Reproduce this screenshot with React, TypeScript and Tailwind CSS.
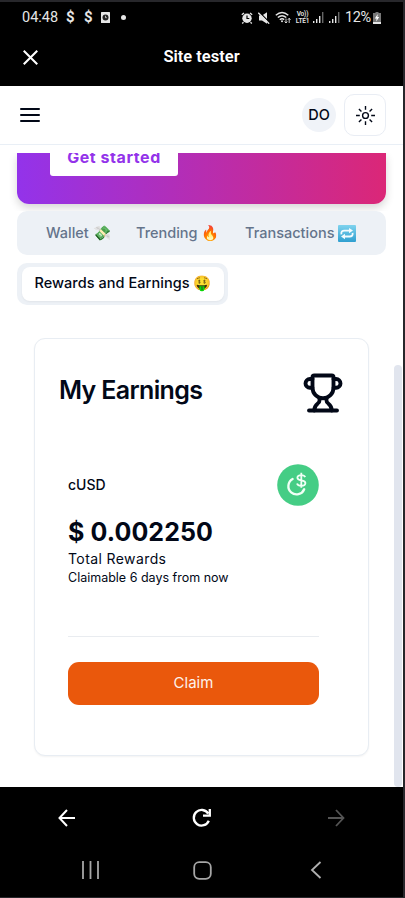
import React from "react";
import { Trophy } from "lucide-react";

function StatusBar() {
  return (
    <div className="flex h-[31px] items-center text-[#e6e6e6] font-[Roboto,sans-serif]">
      <span className="ml-[22px] w-[44px] text-[14.5px] whitespace-nowrap">04:48</span>
      <span className="w-[18px] text-[15px] font-bold">$</span>
      <span className="w-[17px] text-[15px] font-bold">$</span>
      <svg width="9" height="11" viewBox="0 0 9 11" className="shrink-0">
        <rect width="9" height="11" rx="0.5" fill="#e6e6e6" />
        <circle cx="4.5" cy="5.5" r="3" fill="#222" />
        <path d="M4.5 3.8v1.9h1.3" stroke="#ddd" strokeWidth="0.8" fill="none" />
      </svg>
      <span className="ml-[11px] size-[5px] shrink-0 rounded-full bg-[#e6e6e6]" />
      <div className="ml-auto mr-[22px] flex shrink-0 items-center">
        <svg width="12" height="12" viewBox="0 0 12 12" className="mr-[5px]">
          <circle cx="6" cy="6.3" r="4.7" fill="#e6e6e6" />
          <path d="M.8 2.8 3 .9M11.2 2.8 9 .9M2.5 10.2 1.2 11.5M9.5 10.2l1.3 1.3" stroke="#e6e6e6" strokeWidth="1.3" />
          <path d="M6 3.5v3h2.3" stroke="#000" strokeWidth="1.2" fill="none" />
        </svg>
        <svg width="12" height="12" viewBox="0 0 12 12" className="mr-[5px]">
          <path d="M1 3.5h3l5-3.3v11.6L4 8.5H1z" fill="#e6e6e6" />
          <path d="M1.2 0 12 10.8" stroke="#000" strokeWidth="1.2" />
          <path d="m.3.8 10.9 10.9" stroke="#e6e6e6" strokeWidth="1.3" />
        </svg>
        <svg width="16" height="13" viewBox="0 0 16 13" className="mr-[4px]" fill="none" stroke="#e6e6e6">
          <path d="M.8 4.3Q7 -1.3 13.3 4.3M2.8 6.6Q7 2.8 11.3 6.6M4.8 8.8Q7 6.8 9.2 8.6" strokeWidth="1.4" />
          <circle cx="7" cy="10.3" r="1" fill="#e6e6e6" stroke="none" />
          <path d="M11 7.5v4.5m-1.4-1.5 1.4 1.5 1.3-1.5M14.2 12V7.3m-1.4 1.5 1.4-1.5 1.3 1.5" strokeWidth="0.9" />
        </svg>
        <div className="mr-[3px] w-[15px] text-center text-[6.5px] leading-[7px] font-semibold tracking-[-0.2px]">
          <div>Vo))</div>
          <div className="whitespace-nowrap">LTE1</div>
        </div>
        <svg width="11" height="11" viewBox="0 0 11 11" className="mr-[5px]">
          <path d="M0 9h1.4v2H0zM3 7h1.4v4H3zM6 4h1.4v7H6z" fill="#e6e6e6" />
          <path d="M9 0h1.4v11H9z" fill="#666" />
        </svg>
        <svg width="11" height="11" viewBox="0 0 11 11" className="mr-[5px]">
          <path d="M0 9h1.4v2H0zM3 7h1.4v4H3zM6 4h1.4v7H6z" fill="#e6e6e6" />
          <path d="M9 0h1.4v11H9z" fill="#666" />
        </svg>
        <span className="w-[28px] text-[14.5px] tracking-[-0.4px] whitespace-nowrap">12%</span>
        <svg width="8" height="12" viewBox="0 0 8 12">
          <path d="M2.5 0h3v1H8v11H0V1h2.5z" fill="#777" />
          <path d="M0 10h8v2H0z" fill="#e6e6e6" />
          <path d="M4.8 2 1.8 6.4h1.8L3.2 9.4l3-4.4H4.4z" fill="#fff" />
        </svg>
      </div>
    </div>
  );
}

function AppBar() {
  return (
    <div className="grid h-[53px] grid-cols-[60px_1fr_60px] items-center pb-[5px]">
      <svg width="15" height="15" viewBox="0 0 14 14" className="ml-[23px]" stroke="#fff" strokeWidth="1.9">
        <path d="m.7.7 12.6 12.6M13.3.7.7 13.3" />
      </svg>
      <span className="text-center font-[Roboto,sans-serif] text-[16.5px] font-semibold text-white">Site tester</span>
    </div>
  );
}

function SunIcon() {
  return (
    <svg width="19" height="19" viewBox="0 0 15 15" fill="none" stroke="#020817" strokeWidth="1.1">
      <circle cx="7.5" cy="7.5" r="2.3" />
      <path d="M7.5 0v3M7.5 12v3M0 7.5h3M12 7.5h3M2.3 2.3l2 2M10.7 10.7l2 2M2.3 12.7l2-2M10.7 4.3l2-2" />
    </svg>
  );
}

function SiteHeader() {
  return (
    <header className="flex h-[59px] items-center border-b border-[#e9eff6] pl-5 pr-[17px]">
      <svg width="20" height="16" viewBox="0 0 20 16" stroke="#020817" strokeWidth="2" strokeLinecap="round">
        <path d="M1 2h18M1 8h18M1 14h18" />
      </svg>
      <div className="ml-auto mr-2 flex size-[34px] items-center justify-center rounded-full bg-[#f0f3f8] text-[14.5px] font-medium">DO</div>
      <button className="flex size-[42px] items-center justify-center rounded-[10px] border border-[#e9edf4]">
        <SunIcon />
      </button>
    </header>
  );
}

function Hero() {
  return (
    <div className="mt-2 h-[58px] shrink-0 overflow-hidden px-[17px]">
      <div className="h-[51px] rounded-b-xl bg-linear-to-r/srgb from-[#9333ea] to-[#db2777] pl-[33px] shadow-[0_4px_8px_rgba(0,0,0,0.16)]">
        <div className="flex h-[23px] w-[128px] items-end justify-center overflow-hidden rounded-b-[3px] bg-white">
          <span className="mb-[7px] text-[16px] leading-[24px] font-bold tracking-[0.55px] whitespace-nowrap text-[#9333ea]">Get started</span>
        </div>
      </div>
    </div>
  );
}

function RepeatEmoji() {
  return (
    <svg width="18" height="17" viewBox="0 0 18 17" className="ml-1">
      <defs>
        <linearGradient id="tile" x1="0" y1="0" x2="0" y2="1">
          <stop offset="0" stopColor="#7fd3ee" />
          <stop offset="1" stopColor="#2f9fd0" />
        </linearGradient>
      </defs>
      <rect width="18" height="17" rx="1" fill="url(#tile)" />
      <path d="M3.4 9.3C3 6.5 4.4 5.6 6.3 5.6h5.2M14.6 7.9c.4 2.8-1 3.6-2.9 3.6H6.6" fill="none" stroke="#f3fbfe" strokeWidth="1.8" />
      <path d="m11 2.9 4 2.7-4 2.7zM7 8.8l-4 2.7 4 2.7z" fill="#f3fbfe" />
    </svg>
  );
}

function Tabs() {
  return (
    <div className="px-[17px] text-[14.5px] font-medium text-[#64748b]">
      <div className="flex h-[44px] items-center rounded-[10px] bg-[#edf1f6] pl-[29px] whitespace-nowrap">
        <span className="w-[90px]">Wallet 💸</span>
        <span className="w-[109px]">Trending 🔥</span>
        <span className="flex items-center">
          Transactions
          <RepeatEmoji />
        </span>
      </div>
      <div className="mt-2 flex h-[42px] w-[211px] rounded-[10px] bg-[#edf1f6] p-1 pl-[5px]">
        <div className="flex flex-1 items-center justify-center rounded-lg bg-white pb-[2px] tracking-[0.05px] whitespace-nowrap text-[#020817] shadow-xs">Rewards and Earnings 🤑</div>
      </div>
    </div>
  );
}

function CusdLogo() {
  return (
    <svg width="42" height="42" viewBox="0 0 42 42" fill="none">
      <circle cx="21" cy="21" r="20.8" fill="#45cd85" />
      <path d="M15.6 15A8.2 8.2 0 1 0 27.2 25.2" stroke="#f1fff6" strokeWidth="2.3" strokeLinecap="round" />
      <path d="M28.2 13.1c-.6-1.4-2.1-2-3.9-2-2.4 0-3.9 1-3.9 2.7 0 3.9 8 1.4 8 5.3 0 1.8-1.7 2.8-4.1 2.8-2.2 0-3.8-.8-4.3-2.4M24.3 8.8v15" stroke="#f1fff6" strokeWidth="1.8" />
    </svg>
  );
}

function EarningsCard() {
  return (
    <section className="mx-[34px] mt-[33px] h-[418px] w-[335px] rounded-[11px] border border-[#e8edf3] bg-white shadow-xs">
      <div className="flex h-[104px] items-center justify-between pl-[24px] pr-[24px]">
        <h2 className="text-[25px] font-semibold tracking-[-0.65px]">My Earnings</h2>
        <Trophy size={42} strokeWidth={2.2} className="mt-[4px]" />
      </div>
      <div className="ml-[33px] w-[251px]">
        <div className="mt-[21px] flex h-[42px] items-center justify-between">
          <span className="pb-[2px] text-[14px] font-medium">cUSD</span>
          <CusdLogo />
        </div>
        <div className="mt-[9px] text-[25px] leading-[34px] font-bold tracking-[0.1px] whitespace-nowrap">$ 0.002250</div>
        <div className="text-[14px] leading-[19px] tracking-[0.4px]">Total Rewards</div>
        <div className="text-[12.5px] leading-[19px]">Claimable 6 days from now</div>
        <hr className="mt-[49px] border-[#e9ecf0]" />
        <button className="mt-[25px] flex h-[43px] w-full items-center justify-center rounded-[11px] bg-[#ea580c] text-[15px] text-[#fdf3ed]">Claim</button>
      </div>
    </section>
  );
}

function BottomBars() {
  return (
    <footer className="h-[110px] bg-black">
      <div className="flex h-[61px] items-center justify-between pl-[58px] pr-[58px]">
        <svg width="18" height="18" viewBox="0 0 18 18" fill="none" stroke="#fff" strokeWidth="2">
          <path d="M9 1 1.5 9 9 17M1.5 9H17" />
        </svg>
        <svg width="20" height="20" viewBox="0 0 20 20" fill="none" stroke="#fff" strokeWidth="2.3">
          <path d="M16.8 12.7A7.8 7.8 0 1 1 16.2 5.6M17.8 1v6.6H11" />
        </svg>
        <svg width="18" height="18" viewBox="0 0 18 18" fill="none" stroke="#555" strokeWidth="1.8">
          <path d="m9 1 7.5 8L9 17M16.5 9H1" />
        </svg>
      </div>
      <div className="flex h-[44px] items-center pl-[81px]">
        <svg width="19" height="18" viewBox="0 0 19 18" stroke="#a6a6a6" strokeWidth="1.8">
          <path d="M2 0v18M9.5 0v18M17 0v18" />
        </svg>
        <svg width="19" height="19" viewBox="0 0 19 19" className="ml-[93px]" fill="none" stroke="#a6a6a6" strokeWidth="1.8">
          <rect x="1.2" y="1.2" width="16.6" height="16.6" rx="5" />
        </svg>
        <svg width="12" height="18" viewBox="0 0 12 18" className="ml-[98px]" fill="none" stroke="#b0b0b0" strokeWidth="1.8">
          <path d="M10.5 1 2 9l8.5 8" />
        </svg>
      </div>
    </footer>
  );
}

export default function App() {
  return (
    <div className="h-[898px] w-[405px] overflow-hidden border-t-2 border-r-2 border-b border-[#27272b] bg-white font-[Inter,sans-serif] text-[#020817]">
      <div className="h-[84px] bg-black">
        <StatusBar />
        <AppBar />
      </div>
      <main className="relative h-[701px] overflow-hidden">
        <SiteHeader />
        <Hero />
        <Tabs />
        <EarningsCard />
        <div className="absolute right-[1px] bottom-0 h-[422px] w-[8px] rounded-full bg-[#e1e5ee]" />
      </main>
      <BottomBars />
    </div>
  );
}
